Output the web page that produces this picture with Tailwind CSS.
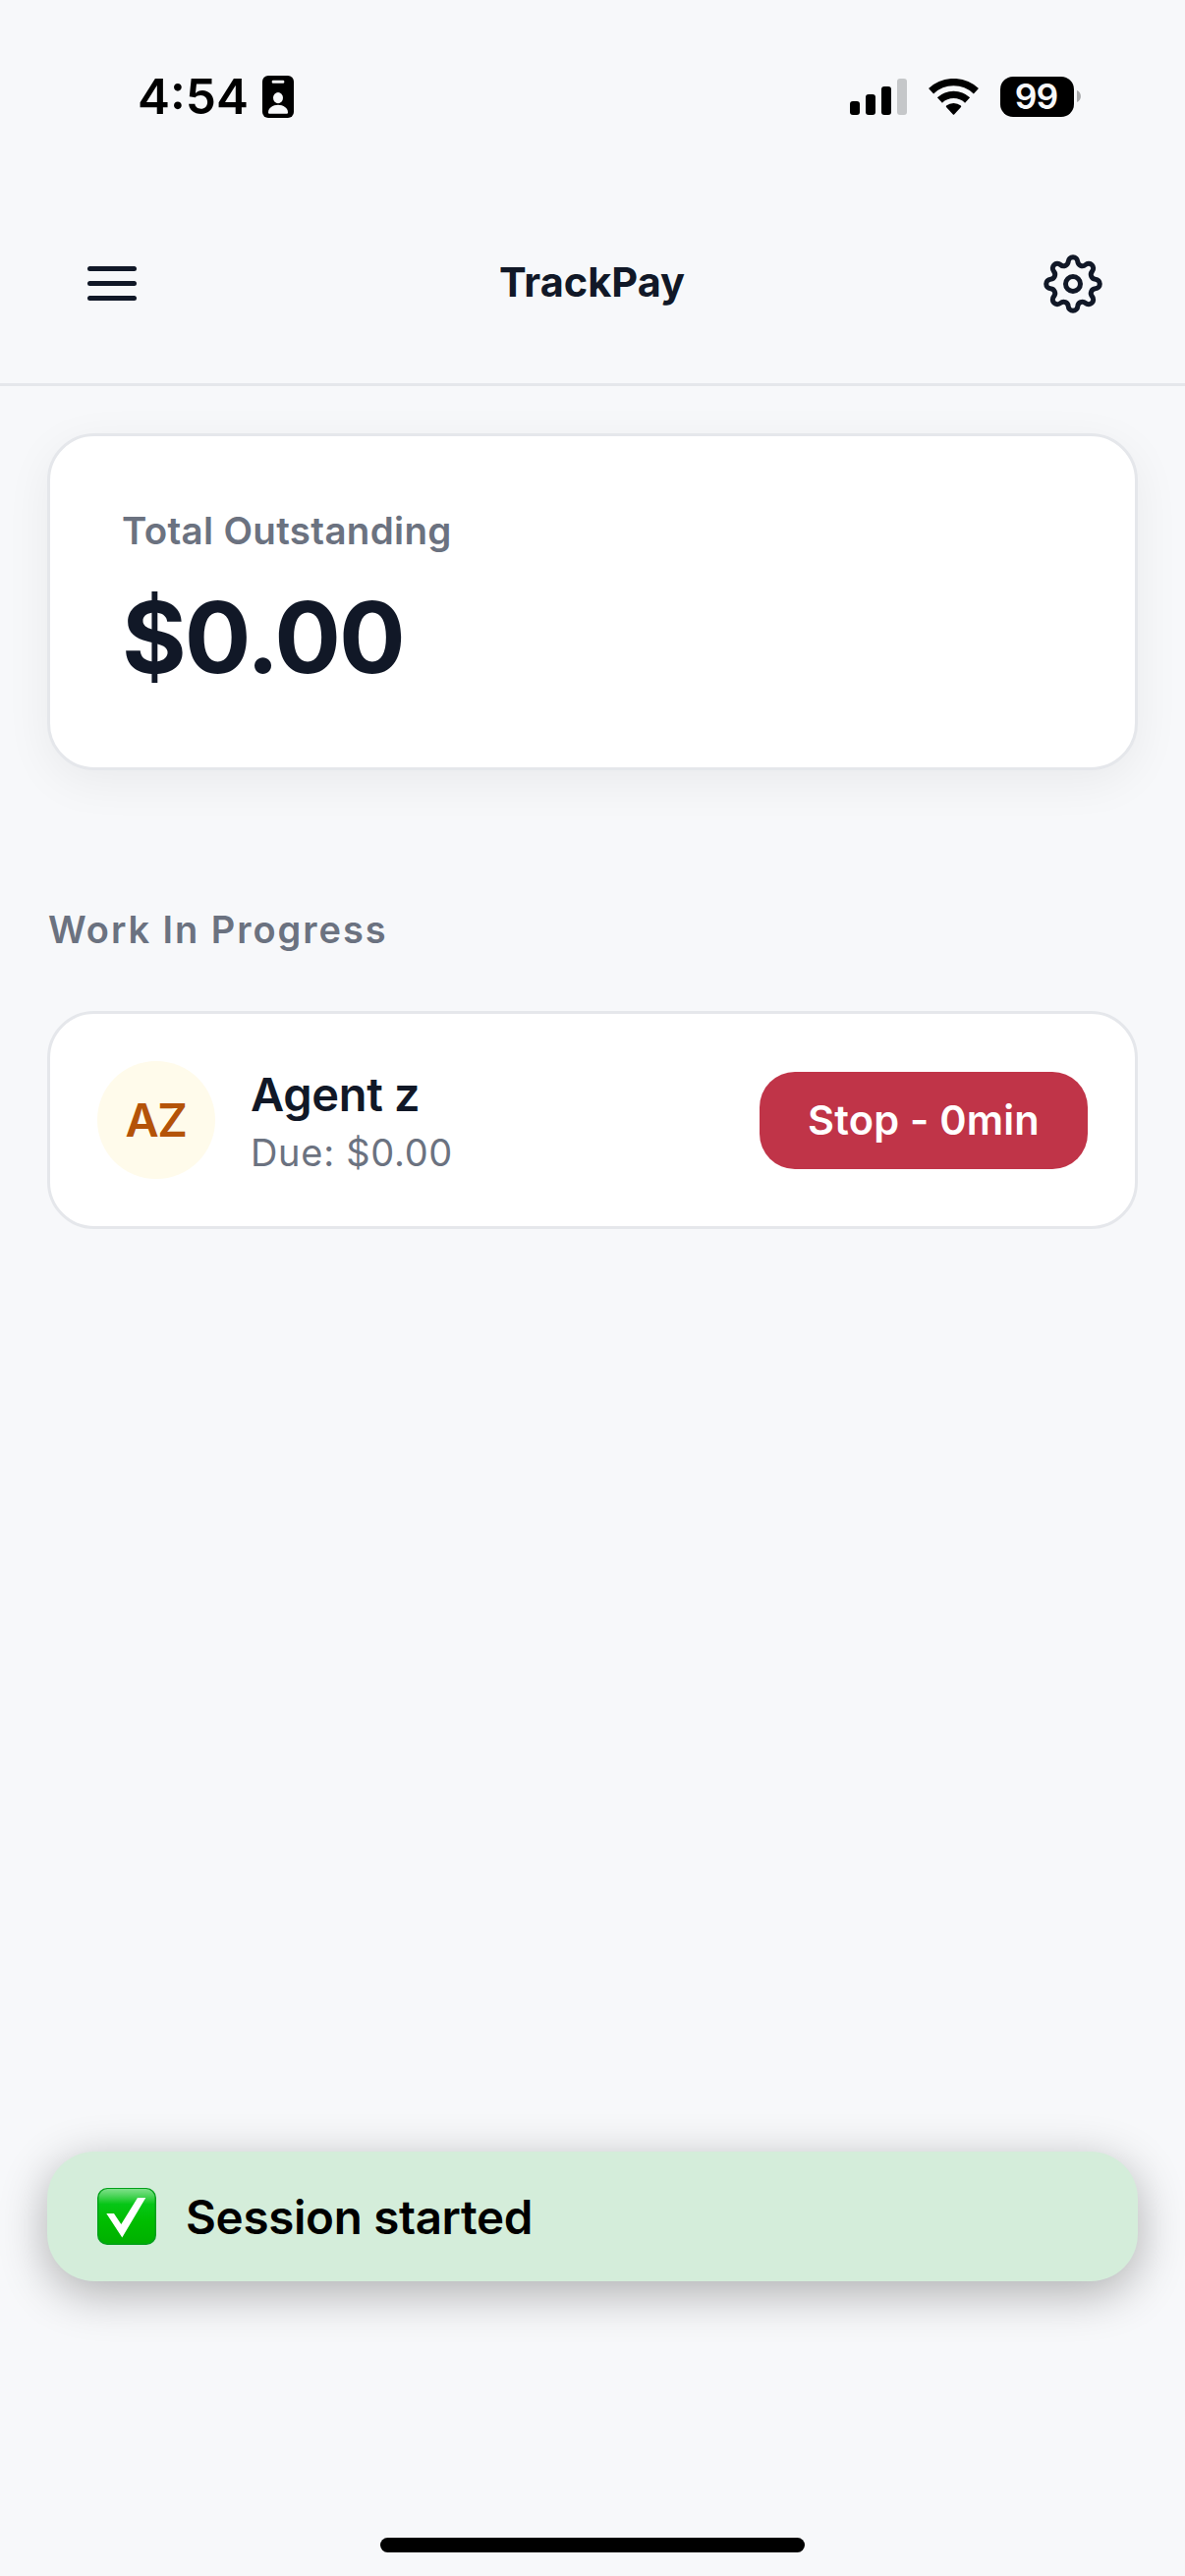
<!DOCTYPE html>
<html lang="en">
<head>
<meta charset="utf-8">
<title>TrackPay</title>
<script src="https://cdn.jsdelivr.net/npm/@tailwindcss/browser@4"></script>
</head>
<body class="flex h-[2622px] w-[1206px] flex-col overflow-hidden bg-[#f7f8fa] font-[Inter,sans-serif] whitespace-nowrap text-[#111827]">

<!-- Status bar -->
<div class="flex h-[196px] shrink-0 items-center justify-between pl-[140px] pr-[106px] text-black">
  <div class="flex items-center">
    <span class="w-[127px] text-[49.5px] leading-[60px] font-semibold">4:54</span>
    <svg class="h-[43px] w-8" viewBox="0 0 32 43">
      <rect width="32" height="43" rx="6" fill="#000"/>
      <rect x="9.7" y="4.8" width="12.6" height="3" rx="1.2" fill="#f7f8fa"/>
      <ellipse cx="16" cy="22.6" rx="5" ry="5.6" fill="#f7f8fa"/>
      <path d="M6 37.4c0-4.500 4.600-7.700 10-7.700s10 3.200 10 7.700c0 .8-.6 1.300-1.400 1.300H7.400c-.8 0-1.400-.5-1.400-1.300z" fill="#f7f8fa"/>
    </svg>
  </div>
  <div class="flex items-center">
    <svg class="h-[37px] w-[58px]" viewBox="0 0 58 37">
      <rect y="23" width="10" height="14" rx="3"/>
      <rect x="16" y="16" width="10" height="21" rx="3"/>
      <rect x="32" y="8" width="10" height="29" rx="3"/>
      <rect x="48" width="10" height="37" rx="3" fill="#c5c7c9"/>
    </svg>
    <svg class="ml-[22px] h-[37px] w-[51px]" viewBox="0 0 51 37">
      <path d="M2.600 12.700A33.400 33.400 0 0 1 48.400 12.700" fill="none" stroke="#000" stroke-width="7.400"/>
      <path d="M11.400 22A20.600 20.600 0 0 1 39.600 22" fill="none" stroke="#000" stroke-width="7.400"/>
      <path d="M18 28.900a1 1 0 0 1 .1-1.300A11.500 11.500 0 0 1 32.900 27.600a1 1 0 0 1 .1 1.300L26.100 36.400a.9.9 0 0 1-1.200 0z"/>
    </svg>
    <div class="ml-[22px] flex h-[41px] w-[75px] items-center justify-center rounded-[13px] bg-black pr-0.5 text-[35.5px] leading-[41px] font-semibold tracking-[-1px] text-[#f7f8fa]">99</div>
    <svg class="ml-[3px] h-3 w-1" viewBox="0 0 4 12"><path d="M0 0C5.300 2 5.300 10 0 12z" fill="#aaabad"/></svg>
  </div>
</div>

<!-- Header -->
<header class="flex h-[197px] shrink-0 border-b-[3px] border-[#e5e7eb] pr-[84px] pb-3 pl-[89px]">
  <div class="flex flex-1 items-center justify-between">
    <div class="flex w-[60px] flex-col gap-2.5 pt-[3px]">
      <span class="h-[5px] w-[50px] rounded-full bg-[#111827]"></span>
      <span class="h-[5px] w-[50px] rounded-full bg-[#111827]"></span>
      <span class="h-[5px] w-[50px] rounded-full bg-[#111827]"></span>
    </div>
    <h1 class="mr-[6px] text-[41.5px] leading-[50px] font-bold">TrackPay</h1>
    <svg class="mt-[3px] h-[60px] w-[60px]" viewBox="-30 -30 60 60" fill="none" stroke="#111827" stroke-width="5" stroke-linejoin="round">
      <circle r="7.500"/>
      <path d="M-4.780-22.800A4.790 4.790 0 0 1 4.780-22.800A4.790 4.790 0 0 0 12.740-19.500A4.790 4.790 0 0 1 19.500-12.740A4.790 4.790 0 0 0 22.800-4.780A4.790 4.790 0 0 1 22.800 4.780A4.790 4.790 0 0 0 19.500 12.740A4.790 4.790 0 0 1 12.740 19.500A4.790 4.790 0 0 0 4.780 22.800A4.790 4.790 0 0 1-4.780 22.800A4.790 4.790 0 0 0-12.740 19.500A4.790 4.790 0 0 1-19.500 12.740A4.790 4.790 0 0 0-22.800 4.780A4.790 4.790 0 0 1-22.800-4.780A4.790 4.790 0 0 0-19.500-12.740A4.790 4.790 0 0 1-12.740-19.500A4.790 4.790 0 0 0-4.780-22.800Z"/>
    </svg>
  </div>
</header>

<main class="flex flex-1 flex-col px-12 pt-12">
  <!-- Outstanding balance -->
  <section class="flex h-[343px] flex-col rounded-[48px] border-[3px] border-[#e5e7eb] bg-white pt-[71px] pl-[73px] shadow-[0_12px_48px_rgba(0,0,0,0.06)]">
    <p class="text-[38.5px] leading-[50px] font-semibold tracking-[0.32px] text-[#6b7280]">Total Outstanding</p>
    <p class="mt-6 text-[100.5px] leading-[120px] font-bold tracking-[-2px]">$0.00</p>
  </section>

  <h2 class="mt-[137px] pl-px text-[38px] leading-[50px] font-semibold tracking-[1.95px] text-[#6b7280]">Work In Progress</h2>

  <!-- Active worker -->
  <section class="mt-[58px] flex h-[222px] items-center rounded-[48px] border-[3px] border-[#e5e7eb] bg-white px-12">
    <div class="flex h-[120px] w-[120px] items-center justify-center rounded-full bg-[#fffbeb] pr-px text-[47px] leading-[60px] font-semibold tracking-[-1.5px] text-[#b45309]">AZ</div>
    <div class="ml-9 flex flex-1 flex-col gap-1 pt-px">
      <p class="text-[47px] leading-[60px] font-semibold tracking-[-0.3px]">Agent z</p>
      <p class="text-[38px] leading-[50px] tracking-[0.7px] text-[#6b7280]">Due: $0.00</p>
    </div>
    <button class="h-[99px] w-[334px] rounded-[36px] bg-[#c03448] text-[41.5px] leading-[99px] font-semibold tracking-[0.21px] text-white">Stop - 0min</button>
  </section>

  <!-- Toast -->
  <div class="mt-[939px] flex h-[132px] items-center rounded-[48px] bg-[#d4edda] pl-[51px] text-black shadow-[0_12px_48px_rgba(0,0,0,0.3)]">
    <svg class="h-[58px] w-[60px]" viewBox="0 0 60 58">
      <defs>
        <linearGradient id="face" x1="0" y1="0" x2="0" y2="1">
          <stop offset="0" stop-color="#7fe08a"/>
          <stop offset=".12" stop-color="#4fd45c"/>
          <stop offset=".28" stop-color="#06c616"/>
          <stop offset=".6" stop-color="#00bd00"/>
          <stop offset="1" stop-color="#00b000"/>
        </linearGradient>
      </defs>
      <rect width="60" height="58" rx="10" fill="#04a01a"/>
      <rect x="1.500" y="1" width="57" height="55.500" rx="9" fill="url(#face)"/>
      <path d="M9.300 26H17L24.300 37L41 10H49.300L25.300 50.500Z" fill="#fff"/>
    </svg>
    <p class="ml-[30px] pt-0.5 text-[47.5px] leading-[60px] font-semibold tracking-[-0.3px]">Session started</p>
  </div>

  <!-- Home indicator -->
  <div class="mt-auto mb-6 h-[15px] w-[432px] self-center rounded-full bg-black"></div>
</main>
</body>
</html>
